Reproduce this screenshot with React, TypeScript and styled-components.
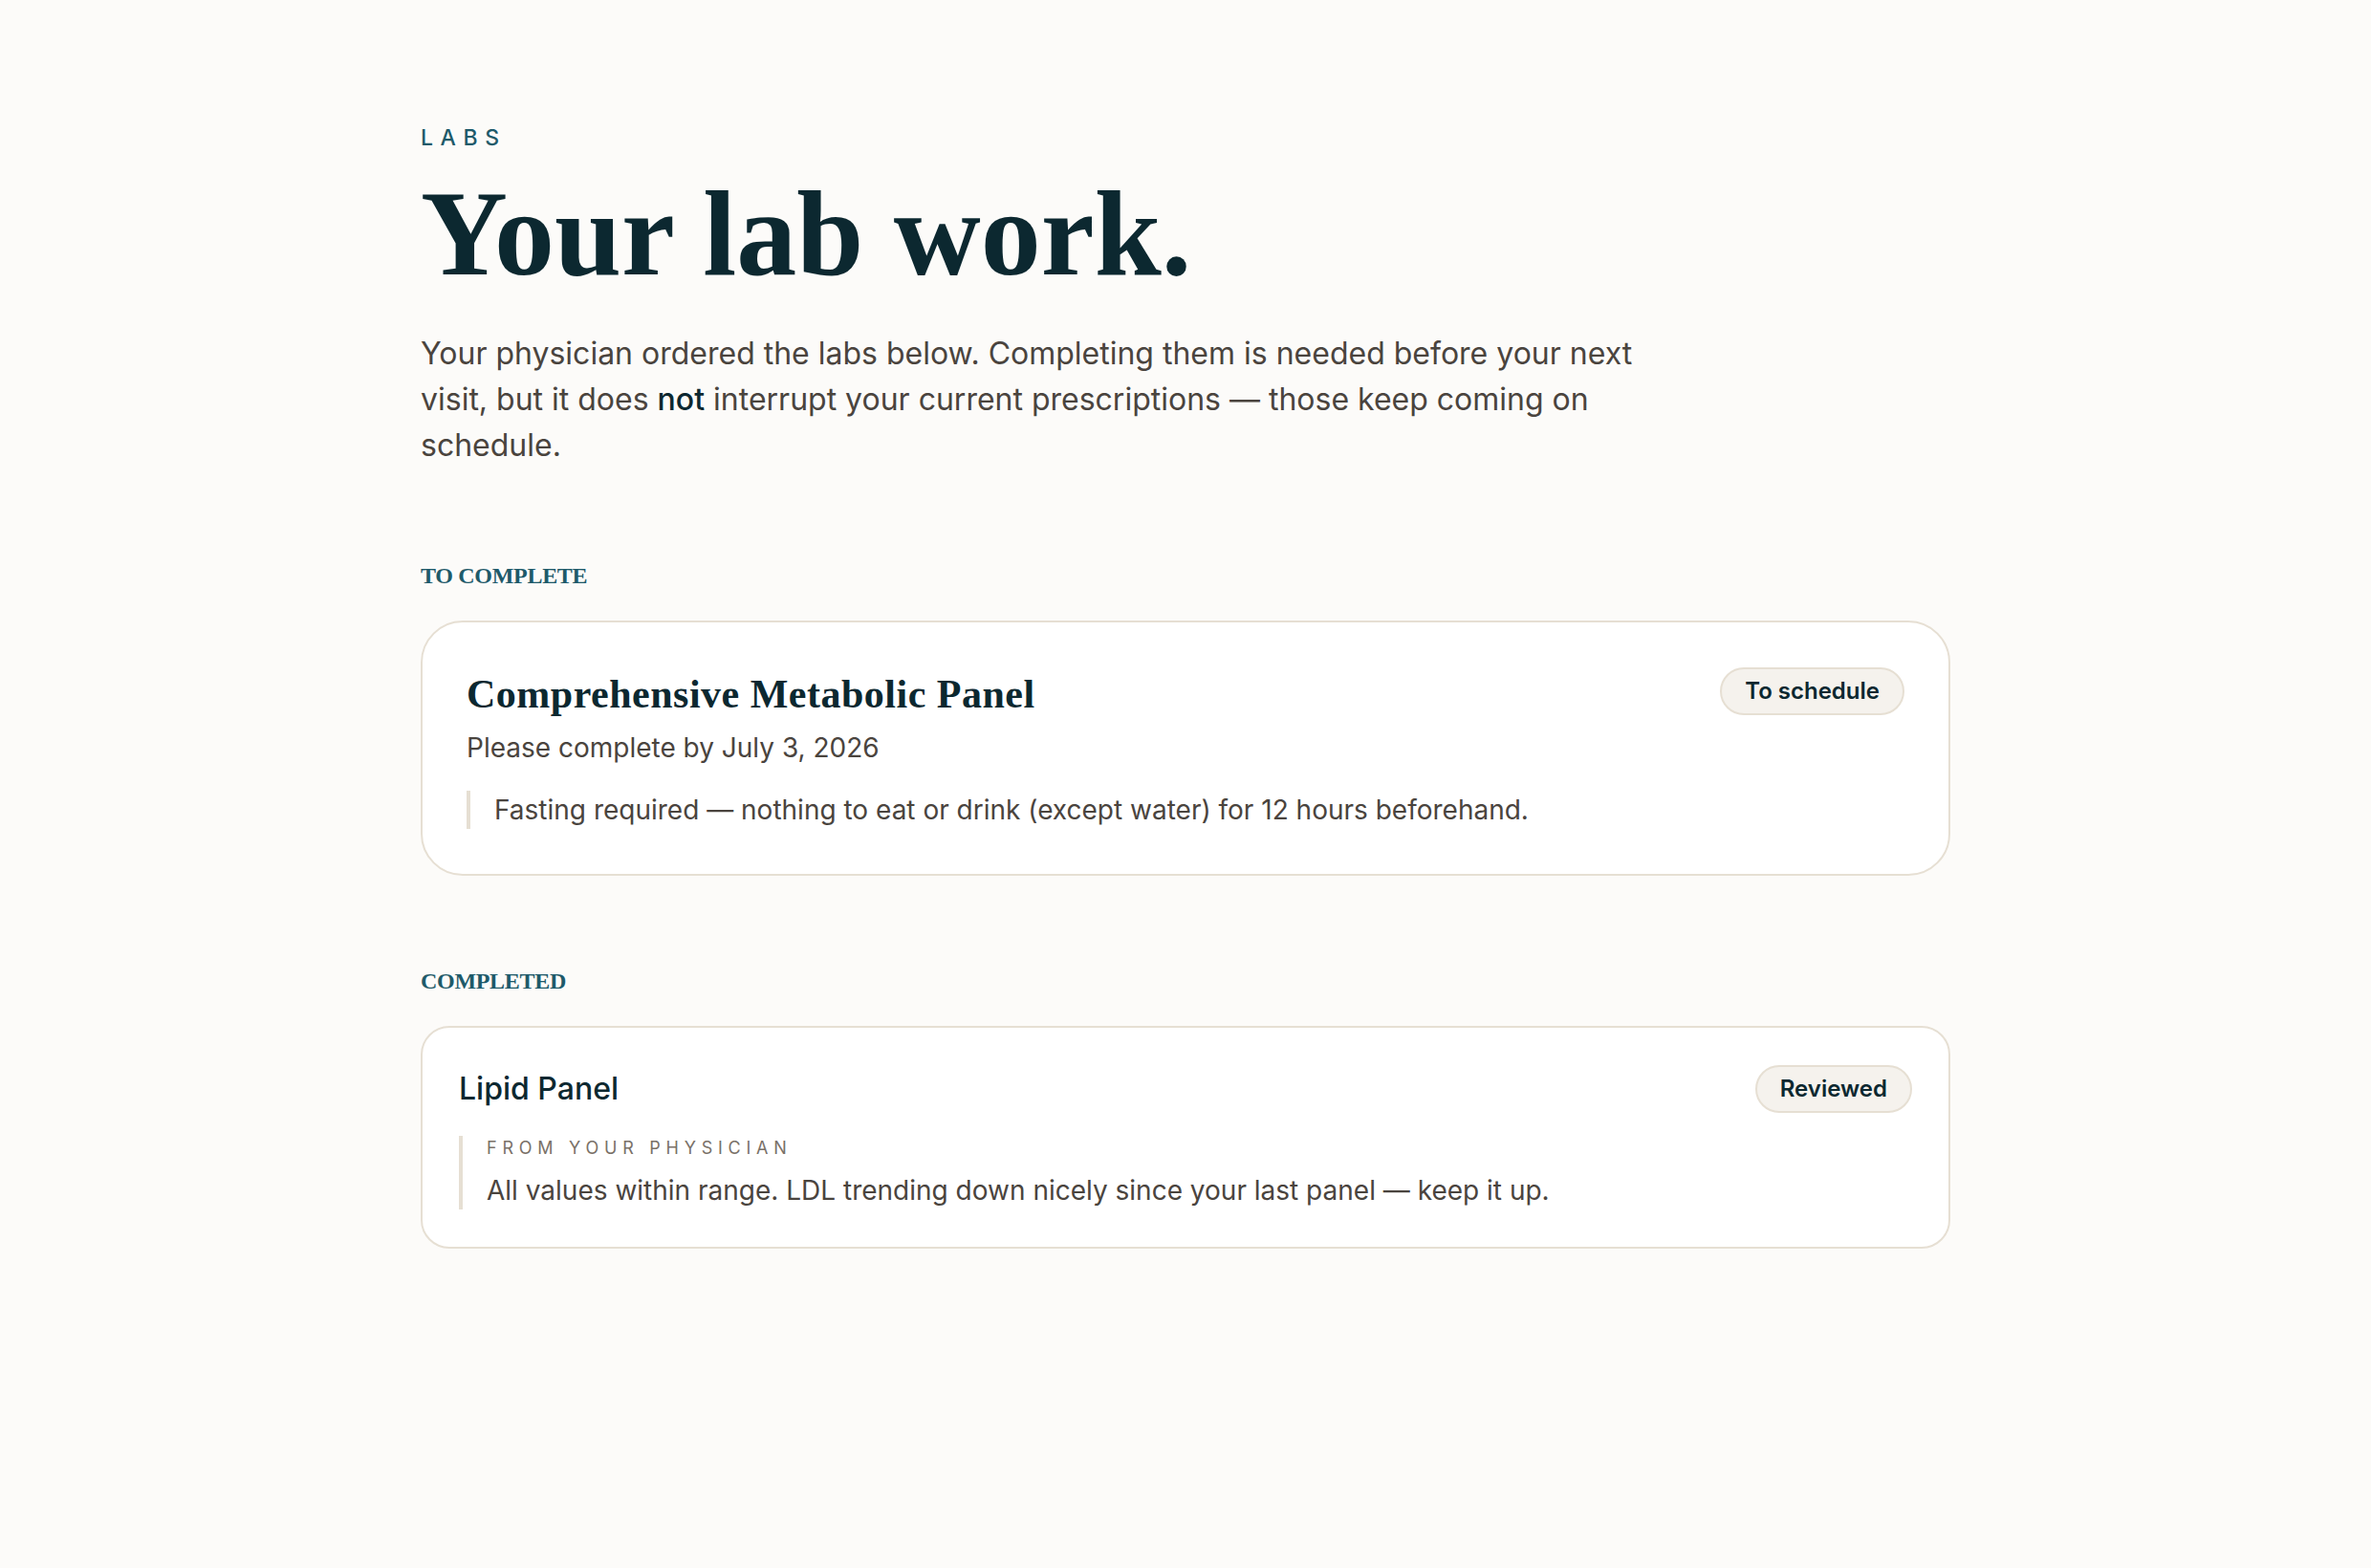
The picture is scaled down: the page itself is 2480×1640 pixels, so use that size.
import styled, { createGlobalStyle } from "styled-components";

const GlobalStyle = createGlobalStyle`
  html, body {
    margin: 0;
    padding: 0;
    background: #fcfbf9;
    min-height: 100vh;
  }
  body {
    font-family: Inter, "Noto Sans", "Liberation Sans", sans-serif;
    color: #4a443e;
  }
  * {
    box-sizing: border-box;
  }
`;

const Page = styled.main`
  width: 1600px;
  margin: 0 auto;
  padding: 132px 0 200px;
`;

const Eyebrow = styled.div`
  font-size: 23px;
  line-height: 24px;
  font-weight: 500;
  letter-spacing: 0.33em;
  color: #1e5a6a;
  text-transform: uppercase;
`;

const Title = styled.h1`
  margin: 26px 0 0;
  font-family: "Liberation Serif", "DejaVu Serif", serif;
  font-size: 126px;
  line-height: 1;
  font-weight: 700;
  color: #0c2830;
`;

const Intro = styled.p`
  margin: 38px 0 0;
  max-width: 1280px;
  font-size: 32px;
  line-height: 48px;
  color: #4a443e;

  strong {
    font-weight: 500;
    color: #0c2830;
  }
`;

const Section = styled.section<{ $top: number }>`
  margin-top: ${(p) => p.$top}px;
  display: flex;
  flex-direction: column;
  gap: 35px;
`;

const SectionLabel = styled.h2`
  margin: 0;
  font-family: "Liberation Serif", "DejaVu Serif", serif;
  font-size: 24px;
  line-height: 23px;
  font-weight: 700;
  letter-spacing: -0.3px;
  color: #1e5a6a;
  text-transform: uppercase;
`;

const Card = styled.article<{ $done?: boolean }>`
  background: #ffffff;
  border: 2px solid #e6dfd3;
  border-radius: ${(p) => (p.$done ? "30px" : "44px")};
  padding: ${(p) => (p.$done ? "39px 38px" : "47px 46px")};
`;

const CardHead = styled.div<{ $center?: boolean }>`
  display: flex;
  justify-content: space-between;
  align-items: ${(p) => (p.$center ? "center" : "flex-start")};
  gap: 24px;
`;

const LabName = styled.h3`
  margin: 0;
  font-family: "Liberation Serif", "DejaVu Serif", serif;
  font-size: 42px;
  line-height: 56px;
  font-weight: 700;
  letter-spacing: 0.5px;
  color: #0c2830;
`;

const DoneName = styled.h3`
  margin: 0;
  font-size: 32px;
  line-height: 40px;
  font-weight: 500;
  color: #0c2830;
`;

const DueDate = styled.div`
  margin-top: 8px;
  font-size: 28px;
  line-height: 40px;
`;

const Badge = styled.span`
  flex-shrink: 0;
  padding: 9px 24px;
  border: 2px solid #e6dfd3;
  border-radius: 999px;
  background: #f5f2ed;
  font-size: 24px;
  line-height: 28px;
  font-weight: 600;
  color: #0c2830;
`;

const Note = styled.div<{ $gap: number }>`
  margin-top: ${(p) => p.$gap}px;
  border-left: 4px solid #e6dfd3;
  padding-left: 25px;
  font-size: 28px;
  line-height: 40px;
  color: #4a443e;
`;

const NoteLabel = styled.div`
  font-size: 18px;
  line-height: 26px;
  letter-spacing: 0.32em;
  text-transform: uppercase;
  color: #7a7168;
  margin-bottom: 11px;
`;

export default function App() {
  return (
    <>
      <GlobalStyle />
      <Page>
        <Eyebrow>Labs</Eyebrow>
        <Title>Your lab work.</Title>
        <Intro>
          Your physician ordered the labs below. Completing them is needed before
          your next visit, but it does <strong>not</strong> interrupt your current
          prescriptions — those keep coming on schedule.
        </Intro>

        <Section $top={101}>
          <SectionLabel>To complete</SectionLabel>
          <Card>
            <CardHead>
              <div>
                <LabName>Comprehensive Metabolic Panel</LabName>
                <DueDate>Please complete by July 3, 2026</DueDate>
              </div>
              <Badge>To schedule</Badge>
            </CardHead>
            <Note $gap={25}>
              Fasting required — nothing to eat or drink (except water) for 12
              hours beforehand.
            </Note>
          </Card>
        </Section>

        <Section $top={99}>
          <SectionLabel>Completed</SectionLabel>
          <Card $done>
            <CardHead $center>
              <DoneName>Lipid Panel</DoneName>
              <Badge>Reviewed</Badge>
            </CardHead>
            <Note $gap={24}>
              <NoteLabel>From your physician</NoteLabel>
              All values within range. LDL trending down nicely since your last
              panel — keep it up.
            </Note>
          </Card>
        </Section>
      </Page>
    </>
  );
}
